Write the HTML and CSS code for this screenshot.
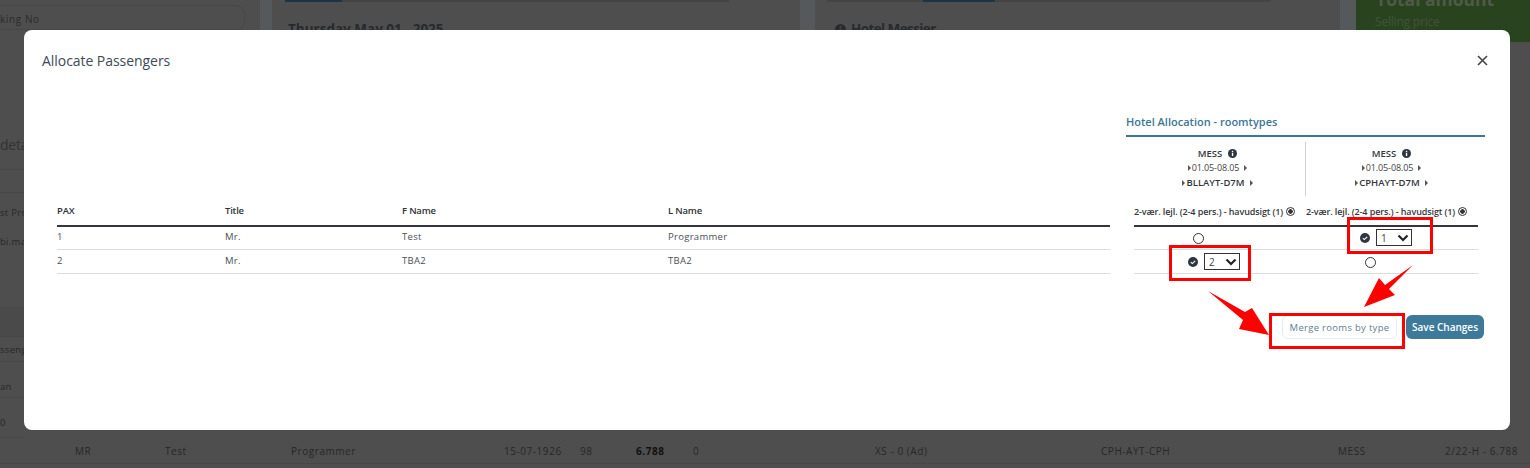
FILE: index.html
```html
<!DOCTYPE html>
<html lang="en">
<head>
<meta charset="utf-8">
<title>Allocate Passengers</title>
<link rel="stylesheet" href="styles.css">
</head>
<body>
<div class="page">
  <div class="backdrop">
    <div class="bg-top">
      <div class="bg-left"><div class="bg-input">king No</div></div>
      <div class="bg-mid">
        <div class="bg-tab"><span class="bg-tab-on"></span></div>
        <div class="bg-date">Thursday May 01 , 2025</div>
      </div>
      <div class="bg-right">
        <div class="bg-tab"><span class="bg-tab-on"></span></div>
        <div class="bg-date"><svg class="bg-dot" viewBox="0 0 10 10"><circle cx="5" cy="5" r="5" fill="#262a2f"/><rect x="4.2" y="4.200" width="1.600" height="3.800" fill="#4e4e4e"/><rect x="4.2" y="2" width="1.600" height="1.400" fill="#4e4e4e"/></svg>Hotel Messier</div>
      </div>
      <div class="bg-total">
        <div class="bg-total-h">Total amount</div>
        <div class="bg-total-s">Selling price</div>
      </div>
    </div>
    <div class="bg-strip">
      <div class="s-row s-a s-big">deta</div>
      <div class="s-row s-b"></div>
      <div class="s-row s-c">st Pro</div>
      <div class="s-row s-d">bi.ma</div>
      <div class="s-row s-e"></div>
      <div class="s-row s-f">sseng</div>
      <div class="s-row s-g"><span>an</span><span>H</span></div>
      <div class="s-row s-h">0</div>
    </div>
    <div class="bg-bottom">
      <span class="c1">MR</span><span class="c2">Test</span><span class="c3">Programmer</span><span class="c4">15-07-1926</span><span class="c5">98</span><span class="c6">6.788</span><span class="c7">0</span><span class="c8">XS - 0 (Ad)</span><span class="c9">CPH-AYT-CPH</span><span class="c10">MESS</span><span class="c11">2/22-H - 6.788</span>
    </div>
  </div>

  <div class="modal">
    <header class="modal-head">
      <h2 class="modal-title">Allocate Passengers</h2>
      <svg class="close" width="11" height="11" viewBox="0 0 11 11"><path d="M1 1l9 9M10 1l-9 9" stroke="#444" stroke-width="1.600" fill="none"/></svg>
    </header>
    <div class="modal-body">
      <table class="pax">
        <thead>
          <tr><th class="w1">PAX</th><th class="w2">Title</th><th class="w3">F Name</th><th>L Name</th></tr>
        </thead>
        <tbody>
          <tr><td>1</td><td>Mr.</td><td>Test</td><td>Programmer</td></tr>
          <tr><td>2</td><td>Mr.</td><td>TBA2</td><td>TBA2</td></tr>
        </tbody>
      </table>
      <section class="alloc">
        <h3 class="alloc-title">Hotel Allocation - roomtypes</h3>
        <div class="hotels">
          <div class="hotel">
            <div class="h-name">MESS <svg class="info" viewBox="0 0 10 10"><circle cx="5" cy="5" r="5" fill="#2f3640"/><rect x="4.300" y="4.200" width="1.500" height="3.600" fill="#fff"/><rect x="4.300" y="2" width="1.500" height="1.400" fill="#fff"/></svg></div>
            <div class="h-date"><i class="tri"></i>01.05-08.05<i class="tri tri-r"></i></div>
            <div class="h-code"><i class="tri"></i>BLLAYT-D7M<i class="tri tri-r"></i></div>
          </div>
          <div class="hotel hotel-b">
            <div class="h-name">MESS <svg class="info" viewBox="0 0 10 10"><circle cx="5" cy="5" r="5" fill="#2f3640"/><rect x="4.300" y="4.200" width="1.500" height="3.600" fill="#fff"/><rect x="4.300" y="2" width="1.500" height="1.400" fill="#fff"/></svg></div>
            <div class="h-date"><i class="tri"></i>01.05-08.05<i class="tri tri-r"></i></div>
            <div class="h-code"><i class="tri"></i>CPHAYT-D7M<i class="tri tri-r"></i></div>
          </div>
        </div>
        <table class="rooms">
          <thead>
            <tr>
              <th>2-vær. lejl. (2-4 pers.) - havudsigt (1) <span class="radio-on"></span></th>
              <th>2-vær. lejl. (2-4 pers.) - havudsigt (1) <span class="radio-on"></span></th>
            </tr>
          </thead>
          <tbody>
            <tr>
              <td class="cell-r"><span class="radio"></span></td>
              <td class="cell-s"><span class="check"><svg viewBox="0 0 10 10" width="10" height="10"><circle cx="5" cy="5" r="5" fill="#2f3640"/><path d="M2.800 5.200l1.500 1.400 2.900-2.800" stroke="#fff" stroke-width="1.100" fill="none"/></svg></span><span class="sel">1<svg class="chev" viewBox="0 0 12 8" width="12" height="8"><path d="M1.500 1.500L6 6l4.500-4.500" stroke="#222" stroke-width="2.200" fill="none"/></svg></span></td>
            </tr>
            <tr>
              <td class="cell-s"><span class="check"><svg viewBox="0 0 10 10" width="10" height="10"><circle cx="5" cy="5" r="5" fill="#2f3640"/><path d="M2.800 5.200l1.500 1.400 2.900-2.800" stroke="#fff" stroke-width="1.100" fill="none"/></svg></span><span class="sel">2<svg class="chev" viewBox="0 0 12 8" width="12" height="8"><path d="M1.500 1.500L6 6l4.500-4.500" stroke="#222" stroke-width="2.200" fill="none"/></svg></span></td>
              <td class="cell-r"><span class="radio"></span></td>
            </tr>
          </tbody>
        </table>
      </section>
    </div>
    <footer class="modal-foot">
      <button class="btn btn-ghost">Merge rooms by type</button>
      <button class="btn btn-main">Save Changes</button>
    </footer>
  </div>

  <svg class="notes" width="1530" height="468" viewBox="0 0 1530 468">
    <g fill="none" stroke="#ff0000" stroke-width="3">
      <rect x="1348.500" y="218.500" width="83" height="34"/>
      <rect x="1170.500" y="246.500" width="79" height="33"/>
      <rect x="1270.500" y="314.500" width="133" height="33"/>
    </g>
    <g fill="#ff0000">
      <polygon points="1413,265 1385,285 1379,278 1364,307 1395,295 1389,289"/>
      <polygon points="1208,291 1245,312 1252,308 1269,335 1239,329 1243,320"/>
    </g>
  </svg>
</div>
</body>
</html>
```
FILE: styles.css
```css
* { box-sizing: border-box; }
html, body { margin: 0; padding: 0; }
body { font-family: "Open Sans", "Noto Sans", sans-serif; color: #33373d; background: #4e4e4e; }
.page { position: relative; width: 1530px; height: 468px; overflow: hidden; }

/* dimmed page behind the dialog */
.backdrop { height: 468px; display: flex; flex-direction: column; background: #4e4e4e; color: #2a2d30; }
.bg-top { display: flex; height: 42px; flex: none; background: #55595c; }
.bg-left { width: 260px; padding: 5px 15px 0 0; background: #4e4e4e; }
.bg-input { height: 25px; border: 1px solid #474747; border-left: 0; border-radius: 0 9px 9px 0; font-size: 10px; line-height: 27px; letter-spacing: .6px; color: #2b2b2b; }
.bg-mid { width: 528px; margin-left: 12px; padding-left: 13px; background: #4e4e4e; }
.bg-right { width: 525px; margin-left: 15px; padding-left: 12px; background: #4e4e4e; }
.bg-tab { height: 2px; background: #444; width: 444px; }
.bg-tab-on { display: block; width: 57px; height: 2px; background: #1c3544; }
.bg-right .bg-tab-on { width: 72px; margin-left: 96px; }
.bg-date { display: flex; align-items: center; gap: 5px; margin-top: 17px; padding-left: 3px; font-size: 13.500px; line-height: 20px; font-weight: 700; white-space: nowrap; color: #262a2f; }
.bg-right .bg-date { padding-left: 8px; letter-spacing: -.6px; }
.bg-dot { width: 11px; height: 11px; flex: none; }
.bg-total { width: 174px; margin-left: 16px; height: 42px; overflow: hidden; background: #2a431f; }
.bg-total-h { margin: -13px 0 0 20px; font-size: 17.500px; line-height: 24px; font-weight: 700; color: #4f5a49; white-space: nowrap; }
.bg-total-s { margin: 2px 0 0 19px; font-size: 12px; line-height: 18px; letter-spacing: -.2px; color: #3f5636; white-space: nowrap; }

.bg-strip { height: 396px; flex: none; width: 24px; overflow: hidden; font-size: 9.500px; letter-spacing: .3px; display: flex; flex-direction: column; color: #272727; }
.s-row { display: flex; flex: none; align-items: center; white-space: nowrap; border-bottom: 1px solid #474747; }
.s-a { height: 128px; padding-top: 78px; }
.s-big { font-size: 14px; letter-spacing: -.2px; color: #333; }
.s-b { height: 23px; }
.s-c { height: 32px; border: 0; padding-top: 7px; }
.s-d { height: 82px; border: 0; align-items: flex-start; padding-top: 10px; }
.s-e { height: 30px; background: #4a4a4a; }
.s-f { height: 25px; }
.s-g { height: 36px; justify-content: space-between; gap: 12px; padding-top: 14px; }
.s-h { height: 40px; padding-top: 10px; }

.bg-bottom { height: 26px; flex: none; display: flex; align-items: center; font-size: 10px; letter-spacing: .55px; color: #272727; border-bottom: 1px solid #474747; white-space: nowrap; }
.bg-bottom span { display: block; flex: none; }
.c1 { margin-left: 75px; width: 90px; }
.c2 { width: 126px; }
.c3 { width: 213px; }
.c4 { width: 76px; }
.c5 { width: 56px; }
.c6 { width: 57px; font-weight: 700; color: #111; }
.c7 { width: 182px; }
.c8 { width: 226px; }
.c9 { width: 237px; }
.c10 { width: 107px; }

/* dialog */
.modal { position: absolute; left: 24px; top: 30px; width: 1486px; height: 400px; background: #fff; border-radius: 8px; display: flex; flex-direction: column; }
.modal-head { display: flex; align-items: center; justify-content: space-between; height: 62px; flex: none; padding: 0 22px 2px 18px; }
.modal-title { margin: 0; font-size: 14px; letter-spacing: -.05px; font-weight: 400; color: #3c4a58; }
.modal-body { display: flex; align-items: flex-end; padding: 0 25px 0 33px; height: 182px; flex: none; }
.pax { width: 1053px; flex: none; border-collapse: collapse; font-size: 9.500px; }
.pax th { height: 31px; padding: 2px 0 0; text-align: left; font-weight: 600; letter-spacing: -.2px; color: #2f3338; border-bottom: 2px solid #33373d; vertical-align: middle; }
.pax td { height: 24px; padding: 0 0 2px; border-bottom: 1px solid #dcdcdc; letter-spacing: .3px; color: #4b4f55; }
.w1 { width: 168px; }
.w2 { width: 177px; }
.w3 { width: 266px; }
.alloc { width: 359px; margin-left: 16px; flex: none; }
.alloc-title { margin: 0; padding-bottom: 6px; font-size: 11px; line-height: 15px; font-weight: 600; color: #3c7596; border-bottom: 2px solid #3c7596; }
.hotels { display: flex; height: 54px; margin-top: 5px; }
.hotel { width: 179px; flex: none; padding: 5px 0 0 4px; text-align: center; font-size: 9px; line-height: 14.500px; color: #33373d; }
.hotel-b { border-left: 1px solid #d0d0d0; width: 172px; padding-left: 0; }
.h-name { font-weight: 600; font-size: 9.500px; display: flex; align-items: center; justify-content: center; gap: 6px; }
.h-date { letter-spacing: -.1px; color: #444; }
.h-code { font-weight: 600; font-size: 9.500px; }
.h-date, .h-code { display: flex; align-items: center; justify-content: center; }
.info { width: 9px; height: 9px; }
.tri { width: 0; height: 0; border: 3px solid transparent; border-left: 3px solid #555; border-right: 0; margin-right: 1px; }
.tri-r { margin: 0 0 0 5px; }
.rooms { margin-left: 8px; width: 343px; table-layout: fixed; border-collapse: collapse; font-size: 9px; }
.rooms th { width: 172px; height: 30px; padding: 2px 0 0; font-weight: 600; letter-spacing: -.1px; border-bottom: 2px solid #33373d; white-space: nowrap; text-align: left; color: #33373d; }
.rooms td { height: 24px; padding: 0; text-align: left; border-bottom: 1px solid #dcdcdc; }
.rooms .cell-r { padding-left: 59px; }
.rooms .cell-s { padding-left: 54px; }
.radio-on { display: inline-block; width: 9px; height: 9px; margin-left: 1px; border: 1px solid #333; border-radius: 50%; background: radial-gradient(circle, #333 0 2px, #fff 2.500px); vertical-align: -1px; }
.radio { display: inline-block; width: 11px; height: 11px; border: 1px solid #333; border-radius: 50%; vertical-align: middle; }
.check { display: inline-block; vertical-align: middle; margin-right: 6px; line-height: 0; }
.sel { display: inline-flex; align-items: center; justify-content: space-between; width: 36px; height: 17px; padding: 0 2px 0 4px; border: 1px solid #333; font-size: 10px; color: #444; vertical-align: middle; }
.chev { flex: none; }
.modal-foot { display: flex; justify-content: flex-end; gap: 9px; padding: 41px 26px 0 0; }
.btn { font-family: inherit; font-size: 9.500px; height: 24px; border-radius: 6px; padding: 0; }
.btn-ghost { width: 115px; background: #fff; border: 1px solid #e6edf2; color: #62808f; letter-spacing: .3px; }
.btn-main { width: 78px; background: #3d7a9a; border: 0; color: #fff; font-weight: 600; font-size: 10px; }

/* red annotations laid over the screenshot */
.notes { position: absolute; left: 0; top: 0; pointer-events: none; }
```
